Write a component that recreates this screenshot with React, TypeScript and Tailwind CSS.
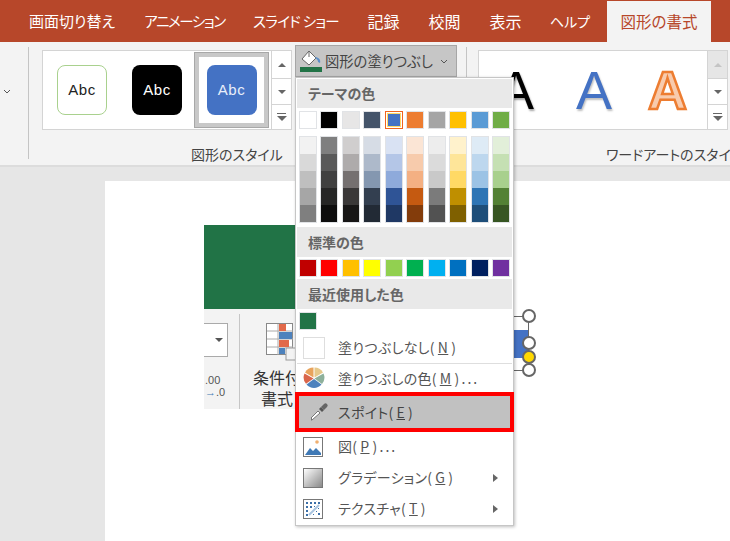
import React from 'react';

const themeTop = ['#ffffff', '#000000', '#e7e6e6', '#44546a', '#4472c4', '#ed7d31', '#a5a5a5', '#ffc000', '#5b9bd5', '#70ad47'];
const themeTints = [
  ['#f2f2f2', '#d9d9d9', '#bfbfbf', '#a6a6a6', '#7f7f7f'],
  ['#7f7f7f', '#595959', '#404040', '#262626', '#0d0d0d'],
  ['#d0cece', '#aeabab', '#757070', '#3a3838', '#171616'],
  ['#d6dce5', '#adb9ca', '#8497b0', '#333f50', '#222a35'],
  ['#d9e2f3', '#b4c6e7', '#8eaadb', '#2f5496', '#1f3864'],
  ['#fbe5d5', '#f7cbac', '#f4b083', '#c55a11', '#833c0b'],
  ['#ededed', '#dbdbdb', '#c9c9c9', '#7b7b7b', '#525252'],
  ['#fff2cc', '#fee599', '#ffd965', '#bf8f00', '#7f6000'],
  ['#deebf6', '#bdd7ee', '#9cc3e5', '#2e75b5', '#1e4e79'],
  ['#e2efd9', '#c5e0b3', '#a8d08d', '#538135', '#375623'],
];
const standard = ['#c00000', '#ff0000', '#ffc000', '#ffff00', '#92d050', '#00b050', '#00b0f0', '#0070c0', '#002060', '#7030a0'];

const font = "font-['Meiryo_UI','Noto_Sans_CJK_JP',sans-serif] [font-feature-settings:'palt']";

const tabs = [
  { label: '画面切り替え', cls: 'w-[116px] text-[15px]' },
  { label: 'アニメーション', cls: 'w-[109px] text-[14.5px] tracking-[-1.4px]' },
  { label: 'スライド ショー', cls: 'w-[114px] text-[14.5px] tracking-[-0.7px]' },
  { label: '記録', cls: 'w-[61px] text-[16px]' },
  { label: '校閲', cls: 'w-[61px] text-[16px]' },
  { label: '表示', cls: 'w-[61px] text-[16px]' },
  { label: 'ヘルプ', cls: 'w-[68px] text-[14px]' },
];

const Swatch = ({ color, selected }: { color: string; selected?: boolean }) => (
  <div className={`h-[18px] w-[18px] border ${selected ? 'border-[#f0641e] p-px' : 'border-[#e1e3e6]'}`}>
    <div className={`h-full w-full ${selected ? 'border border-[#ffd966]' : ''}`} style={{ background: color }} />
  </div>
);

const MenuHeader = ({ children, h }: { children: React.ReactNode; h: string }) => (
  <div className={`${h} flex items-center bg-[#e9e9e9] pl-[11px] text-[14px] font-bold text-[#666666]`}>{children}</div>
);

const Key = ({ k }: { k: string }) => (
  <>
    (<u className="mx-[3px]">{k}</u>)
  </>
);

const Dots = () => <span className="ml-[2px] tracking-[2px]">...</span>;

const MenuItem = ({ icon, children, arrow, h }: { icon: React.ReactNode; children: React.ReactNode; arrow?: boolean; h: string }) => (
  <div className={`${h} flex items-center text-[14px] tracking-[0.3px] text-[#555555]`}>
    <div className="flex w-[41px] justify-start pl-[6px]">{icon}</div>
    <div className="flex-1">{children}</div>
    {arrow && <div className="mr-[14px] h-0 w-0 border-y-[4px] border-l-[5px] border-y-transparent border-l-[#666666]" />}
  </div>
);

const ScrollButtons = ({ disabledTop }: { disabledTop?: boolean }) => (
  <div className="flex w-[20px] flex-col border-l border-[#d4d4d4]">
    <div className={`flex h-[28px] items-center justify-center border-b border-[#d4d4d4] ${disabledTop ? 'bg-[#e6e6e6]' : 'bg-white'}`}>
      <div className={`h-0 w-0 border-x-[4px] border-b-[4px] border-x-transparent ${disabledTop ? 'border-b-[#c4c4c4]' : 'border-b-[#666666]'}`} />
    </div>
    <div className="flex h-[26px] items-center justify-center border-b border-[#d4d4d4] bg-white">
      <div className="h-0 w-0 border-x-[4px] border-t-[4px] border-x-transparent border-t-[#666666]" />
    </div>
    <div className="flex flex-1 flex-col items-center justify-center bg-white">
      <div className="mb-[2px] h-px w-[9px] bg-[#666666]" />
      <div className="h-0 w-0 border-x-[5px] border-t-[5px] border-x-transparent border-t-[#666666]" />
    </div>
  </div>
);

const ShapeStyle = ({ className }: { className: string }) => (
  <div className={`flex h-[50px] w-[50px] items-center justify-center rounded-[8px] font-['Liberation_Sans',sans-serif] text-[15px] tracking-[0.5px] ${className}`}>
    Abc
  </div>
);

const Chevron = ({ className }: { className?: string }) => (
  <svg width="8" height="5" viewBox="0 0 8 5" className={className}>
    <path d="M1 1l3 3 3-3" fill="none" stroke="#555" strokeWidth="1" />
  </svg>
);

const BucketIcon = () => (
  <svg width="24" height="23" viewBox="0 0 24 23">
    <path d="M10 1l7 7-7 7-7-6z" fill="#fff" stroke="#666" strokeWidth="1" />
    <path d="M10 1v6" stroke="#666" strokeWidth="1" />
    <path d="M17 7c3 1 5 3 4 6l-2-1c0-2-1-3-3-4z" fill="#5b8fc9" />
    <rect x="1" y="17" width="22" height="5" fill="#217346" />
  </svg>
);

const PieIcon = () => (
  <svg width="22" height="22" viewBox="0 0 22 22">
    <path d="M10.5 10.5V0.5A10 10 0 0 0 2 5.5z" fill="#e8a35c" />
    <path d="M11.5 10.5V0.5A10 10 0 0 1 20 5.5z" fill="#e6c88a" />
    <path d="M11.5 11.5L20.5 6.5A10 10 0 0 1 19 17z" fill="#8db09b" />
    <path d="M11 12l7.5 5.5A10 10 0 0 1 3.5 17.5z" fill="#4d82bd" />
    <path d="M10.5 11.5L3 16.8A10 10 0 0 1 1.5 6.5z" fill="#d9654a" />
  </svg>
);

const DropperIcon = () => (
  <svg width="20" height="20" viewBox="0 0 20 20">
    <path d="M3 17l-1 1 1 0 8-7-2-2-7 7z" fill="#fff" stroke="#777" strokeWidth="1" />
    <path d="M10 7l3 3 2-2-3-3z" fill="#555" />
    <path d="M12 5l3-3a2 2 0 0 1 3 3l-3 3z" fill="#666" />
  </svg>
);

const PictureIcon = () => (
  <svg width="20" height="20" viewBox="0 0 20 20">
    <rect x="0.5" y="0.5" width="19" height="19" fill="#fff" stroke="#777" />
    <circle cx="14" cy="5" r="1.8" fill="#f0b070" />
    <path d="M2 18l5-7 3 3 3-3 5 5v2z" fill="#3f79b5" />
  </svg>
);

const TextureIcon = () => (
  <svg width="20" height="20" viewBox="0 0 20 20">
    <rect x="0.5" y="0.5" width="19" height="19" fill="#fff" stroke="#777" />
    <path d="M3 3h2v2H3zM7 3h2v2H7zM11 3h2v2h-2zM15 3h2v2h-2zM3 7h2v2H3zM7 7h2v2H7zM11 7h1v1h-1zM3 11h2v2H3zM15 9h1v1h-1zM13 12h1v1h-1zM15 14h2v2h-2zM3 15h2v2H3zM10 15h1v1h-1z" fill="#3b6fa8" />
    <path d="M6 16L16 6" stroke="#a9c4e0" strokeWidth="2" />
  </svg>
);

const CondFormatIcon = () => (
  <svg width="34" height="38" viewBox="0 0 34 38">
    <rect x="0.5" y="0.5" width="26" height="31" fill="#fff" stroke="#888" />
    <path d="M1 8h26M1 16h26M1 24h26M12 1v31" stroke="#aaa" strokeWidth="1" />
    <rect x="13" y="1" width="7" height="7" fill="#e2694a" />
    <rect x="13" y="9" width="13" height="7" fill="#4d82bd" />
    <rect x="13" y="17" width="10" height="7" fill="#e2694a" />
    <rect x="13" y="25" width="6" height="6" fill="#4d82bd" />
    <rect x="20" y="25" width="10" height="12" fill="#f3f3f3" stroke="#999" />
  </svg>
);

const Handle = ({ className, yellow }: { className: string; yellow?: boolean }) => (
  <div className={`absolute h-[14px] w-[14px] rounded-full border-2 border-[#666666] ${yellow ? 'bg-[#ffd800]' : 'bg-white'} ${className}`} />
);

const FillMenu = () => (
  <div className={`absolute left-0 top-[32px] z-20 flex h-[449px] w-[219px] flex-col border border-[#c6c6c6] bg-white p-px shadow-[1px_1px_3px_rgba(0,0,0,0.25)] ${font}`}>
    <MenuHeader h="h-[30px]">テーマの色</MenuHeader>
    <div className="mt-[3px] flex justify-between px-[2px]">
      {themeTop.map((c, i) => (
        <Swatch key={c} color={c} selected={i === 4} />
      ))}
    </div>
    <div className="mt-[7px] flex justify-between px-[2px]">
      {themeTints.map((col, i) => (
        <div key={i} className="flex w-[18px] flex-col border border-[#e1e3e6]">
          {col.map((c, j) => (
            <div key={j} className="h-[17px]" style={{ background: c }} />
          ))}
        </div>
      ))}
    </div>
    <div className="mt-[4px]">
      <MenuHeader h="h-[30px]">標準の色</MenuHeader>
    </div>
    <div className="mt-[2px] flex justify-between px-[2px]">
      {standard.map(c => (
        <Swatch key={c} color={c} />
      ))}
    </div>
    <div className="mt-[2px]">
      <MenuHeader h="h-[30px]">最近使用した色</MenuHeader>
    </div>
    <div className="mt-[3px] px-[2px]">
      <Swatch color="#217346" />
    </div>
    <MenuItem h="h-[31px] mt-[2px]" icon={<div className="h-[22px] w-[22px] border border-[#dedede] bg-white" />}>
      塗りつぶしなし<Key k="N" />
    </MenuItem>
    <div className="h-px bg-[#dedede]" />
    <MenuItem h="h-[29px]" icon={<PieIcon />}>
      塗りつぶしの色<Key k="M" />
      <Dots />
    </MenuItem>
    <div className="-mx-[2px] flex h-[40px] items-center border-[4px] border-[#ff0000] bg-[#c1c1c1] text-[14px] tracking-[0.3px] text-[#444444]">
      <div className="flex w-[39px] justify-center pl-px">
        <DropperIcon />
      </div>
      スポイト
      <Key k="E" />
    </div>
    <MenuItem h="h-[31px]" icon={<PictureIcon />}>
      図<Key k="P" />
      <Dots />
    </MenuItem>
    <MenuItem h="h-[32px]" icon={<div className="h-[20px] w-[20px] border border-[#777777] bg-gradient-to-br from-white to-[#8a8a8a]" />} arrow>
      グラデーション<Key k="G" />
    </MenuItem>
    <MenuItem h="h-[31px]" icon={<TextureIcon />} arrow>
      テクスチャ<Key k="T" />
    </MenuItem>
  </div>
);

export default function App() {
  return (
    <div className={`flex h-[541px] w-[730px] flex-col overflow-hidden bg-[#e6e6e6] ${font}`}>
      {/* tab bar */}
      <div className="flex h-[42px] items-end bg-[#b7472a] pl-[14px] text-white">
        {tabs.map(t => (
          <div key={t.label} className={`flex h-[42px] items-center justify-center whitespace-pre ${t.cls}`}>
            {t.label}
          </div>
        ))}
        <div className="ml-[3px] flex h-[41px] w-[104px] items-center justify-center bg-[#f3f3f3] text-[15.5px] text-[#b7472a]">図形の書式</div>
      </div>

      {/* ribbon */}
      <div className="flex h-[125px] border-b-2 border-[#dcdcdc] bg-[#f3f3f3]">
        <div className="my-[5px] mb-[6px] flex w-[29px] items-start justify-center border-r border-[#c4c4c4] pt-[42px]">
          <Chevron className="mr-[14px]" />
        </div>
        <div className="ml-[13px] flex w-[250px] flex-col pt-[8px]">
          <div className="flex h-[80px] border border-[#d4d4d4] bg-white">
            <div className="flex flex-1 items-center">
              <div className="ml-[14px]">
                <ShapeStyle className="border border-[#a9d18e] bg-white text-[#222222]" />
              </div>
              <div className="ml-[25px]">
                <ShapeStyle className="bg-black text-white" />
              </div>
              <div className="ml-[12px] flex h-[76px] w-[75px] items-center justify-center border-[5px] border-[#c8c8c8] outline outline-1 -outline-offset-1 outline-[#a8a8a8]">
                <ShapeStyle className="bg-[#4472c4] text-[#e8eefa]" />
              </div>
            </div>
            <ScrollButtons />
          </div>
          <div className="mt-[14px] pl-[149px] text-[14px] whitespace-nowrap text-[#444444]">図形のスタイル</div>
        </div>

        <div className="relative ml-[3px] mt-[3px] h-[32px] w-[162px]">
          <div className="flex h-[32px] items-center border border-[#a6a6a6] bg-[#c6c6c6] pl-[3px] text-[14.3px] text-[#444444]">
            <BucketIcon />
            <span className="ml-[2px]">図形の塗りつぶし</span>
            <Chevron className="ml-[7px]" />
          </div>
          <FillMenu />
        </div>

        <div className="my-[5px] mb-[6px] ml-[9px] w-px bg-[#c4c4c4]" />

        <div className="ml-[11px] flex w-[252px] flex-col pt-[8px]">
          <div className="flex h-[80px] w-[250px] border border-[#d4d4d4] bg-white">
            <div className="flex flex-1 items-center font-['Liberation_Sans',sans-serif] text-[54px] leading-none">
              <span className="ml-[19px] text-black [text-shadow:1px_2px_2px_rgba(0,0,0,0.35)]">A</span>
              <span className="ml-[42px] text-[#4472c4] [text-shadow:1px_2px_2px_rgba(0,0,0,0.25)]">A</span>
              <span className="ml-[36px] font-bold text-[#f8cbad] [-webkit-text-stroke:2.5px_#ed7d31]">A</span>
            </div>
            <ScrollButtons disabledTop />
          </div>
          <div className="mt-[14px] pl-[128px] text-[14px] whitespace-nowrap text-[#444444]">ワードアートのスタイル</div>
        </div>
      </div>

      {/* slide area */}
      <div className="flex flex-1 pl-[105px] pt-[14px]">
        <div className="relative flex-1 bg-white">
          {/* pasted picture on the slide */}
          <div className="absolute left-[99px] top-[44px] h-[84px] w-[92px] bg-[#217346]" />
          <div className="absolute left-[99px] top-[128px] h-[100px] w-[92px] overflow-hidden bg-[#f3f3f3]">
            <div className="absolute left-[-10px] top-[14px] flex h-[34px] w-[34px] items-center justify-end border border-[#aaaaaa] bg-white pr-[4px]">
              <div className="h-0 w-0 border-x-[4px] border-t-[4px] border-x-transparent border-t-[#555555]" />
            </div>
            <div className="absolute left-[35px] top-[5px] h-[95px] w-px bg-[#c6c6c6]" />
            <div className="absolute left-[1px] top-[65px] font-['Liberation_Sans',sans-serif] text-[11px] leading-[12px] text-[#555555]">
              .00
              <br />
              <span className="font-bold text-[#3f79b5]">→</span>.0
            </div>
            <div className="absolute left-[62px] top-[14px]">
              <CondFormatIcon />
            </div>
            <div className="absolute left-[49px] top-[58px] w-[64px] text-[16px] leading-[21px] text-[#333333]">
              <div className="whitespace-nowrap">条件付き</div>
              <div className="pl-[8px]">書式</div>
            </div>
          </div>
          {/* selected shape, mostly behind the menu */}
          <div className="absolute left-[405px] top-[149px] h-[28px] w-[18px] bg-[#4472c4]" />
          <div className="absolute left-[405px] top-[135px] h-px w-[18px] bg-[#666666]" />
          <div className="absolute left-[405px] top-[189px] h-px w-[18px] bg-[#666666]" />
          <div className="absolute left-[423px] top-[135px] h-[54px] w-px bg-[#666666]" />
          <Handle className="left-[417px] top-[128px]" />
          <Handle className="left-[417px] top-[155px]" />
          <Handle className="left-[417px] top-[169px]" yellow />
          <Handle className="left-[417px] top-[182px]" />
        </div>
      </div>
    </div>
  );
}
